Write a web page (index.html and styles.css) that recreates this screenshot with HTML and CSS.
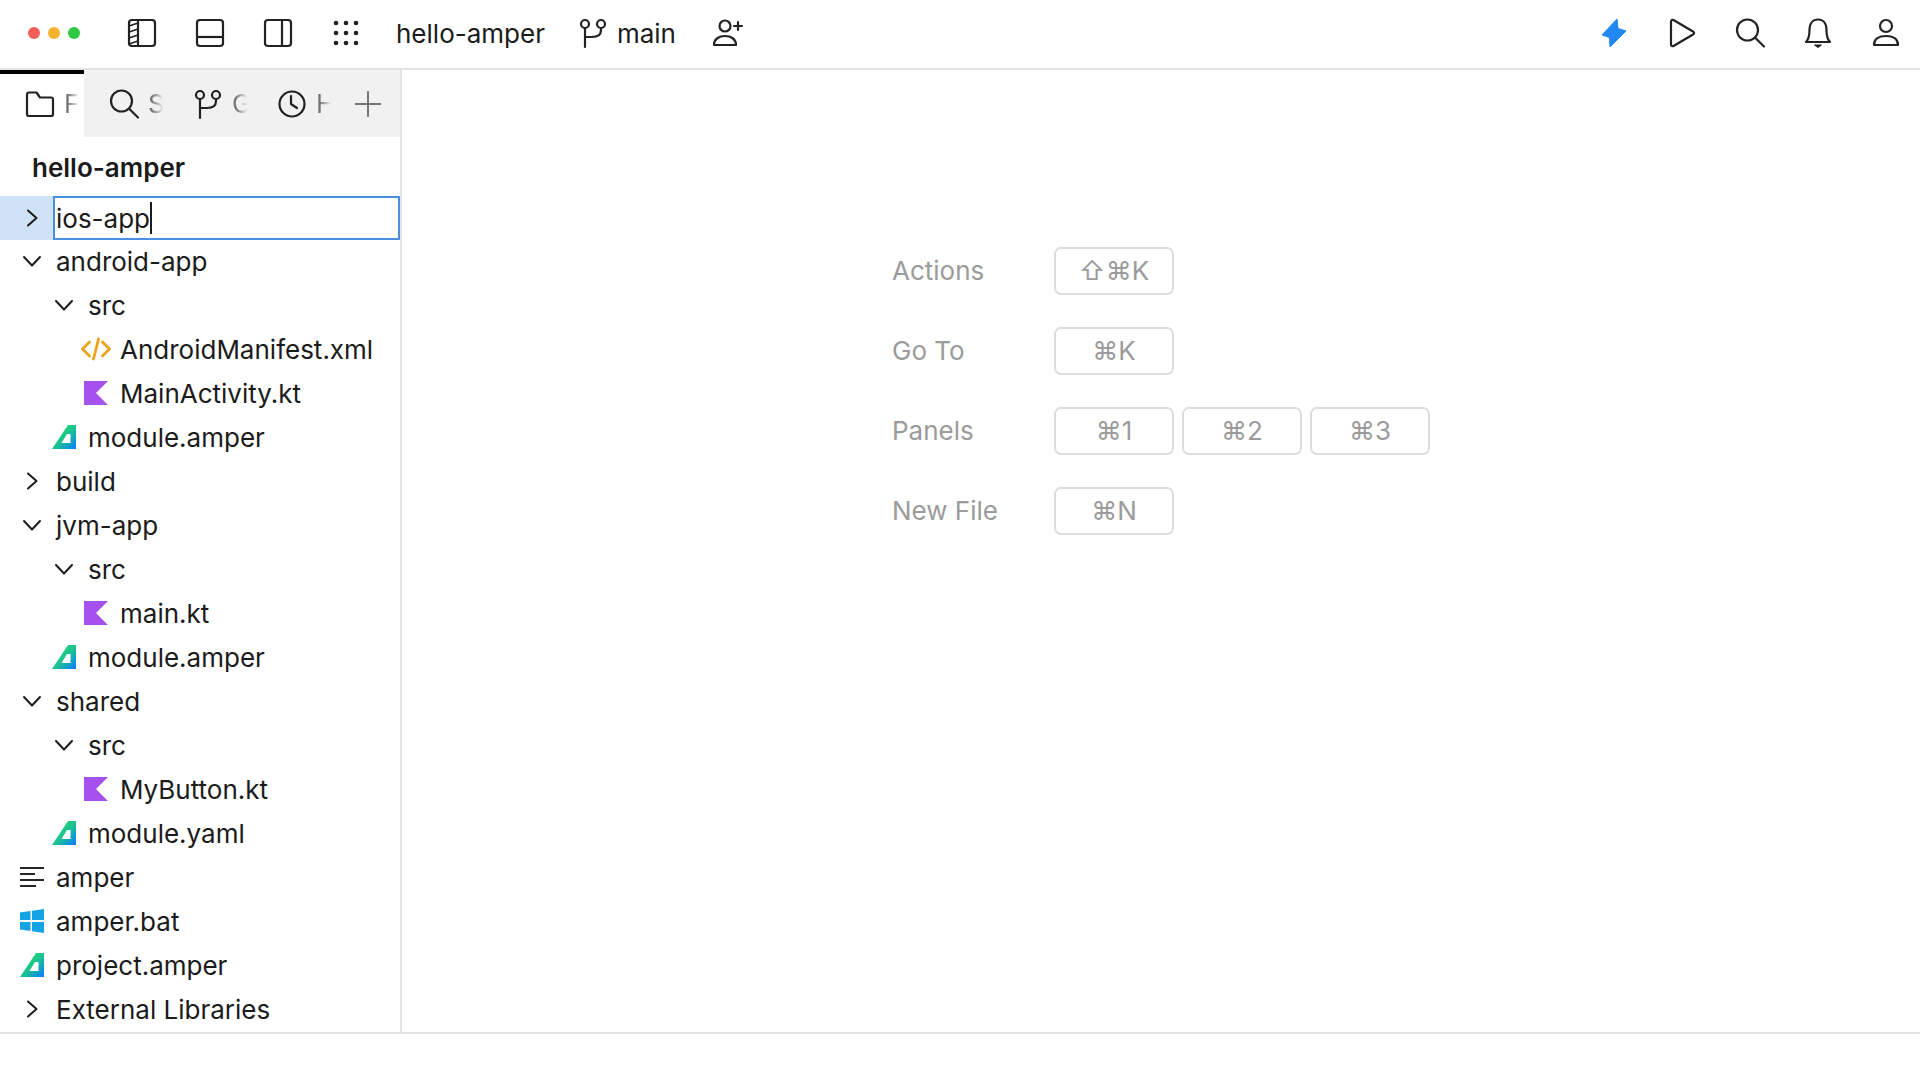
FILE: index.html
```html
<!DOCTYPE html>
<html lang="en">
<head>
<meta charset="utf-8">
<title>hello-amper</title>
<link rel="stylesheet" href="styles.css">
</head>
<body>
<svg class="sprite" aria-hidden="true">
  <defs>
    <linearGradient id="amperGrad" x1="0" y1="0" x2="1" y2="1">
      <stop offset="0" stop-color="#2ad45f"/>
      <stop offset="0.5" stop-color="#1cc78c"/>
      <stop offset="1" stop-color="#0b7bff"/>
    </linearGradient>
    <symbol id="i-chev-r" viewBox="0 0 24 24"><path d="M8 4.500 16.500 12 8 19.500" fill="none" stroke="#1c1c1c" stroke-width="2" stroke-linecap="round" stroke-linejoin="round"/></symbol>
    <symbol id="i-chev-d" viewBox="0 0 24 24"><path d="M4 8 12 16.500 20 8" fill="none" stroke="#1c1c1c" stroke-width="2" stroke-linecap="round" stroke-linejoin="round"/></symbol>
    <symbol id="i-kt" viewBox="0 0 24 24"><path d="M0 0H24L12 12 24 24H0Z" fill="#a650ee"/></symbol>
    <symbol id="i-amper" viewBox="0 0 24 24"><path d="M0 24 16 0H24V24Z" fill="url(#amperGrad)"/><path d="M9.500 18H18.500V9H15Z" fill="#fff"/></symbol>
    <symbol id="i-xml" viewBox="0 0 30 24"><path d="M8.500 5 1.500 12 8.500 19M21.500 5 28.500 12 21.500 19M17.500 2 12.500 22" fill="none" stroke="#eda41c" stroke-width="2.800" stroke-linecap="round" stroke-linejoin="round"/></symbol>
    <symbol id="i-lines" viewBox="0 0 24 24"><path d="M0 3H24M0 9H15M0 15H24M0 21H16" fill="none" stroke="#262626" stroke-width="2"/></symbol>
    <symbol id="i-win" viewBox="0 0 24 24"><path d="M0 3.500 10.500 2V11H0ZM12 1.800 24 0V11H12ZM0 13H10.500V22L0 20.500ZM12 13H24V24L12 22.200Z" fill="#15a3e6"/></symbol>
    <symbol id="i-branch" viewBox="0 0 32 32"><g fill="none" stroke="#222" stroke-width="2.200" stroke-linecap="round"><circle cx="8" cy="7" r="4"/><circle cx="24" cy="7" r="4"/><path d="M8 11V30M24 11V13C24 18 20 20 15 20H8"/></g></symbol>
    <symbol id="i-search" viewBox="0 0 32 32"><g fill="none" stroke="#222" stroke-width="2.200" stroke-linecap="round"><circle cx="13.500" cy="13" r="10.500"/><path d="M21.500 21 30 29.500"/></g></symbol>
  </defs>
</svg>
<div class="app">
  <header class="topbar">
    <div class="lights"><span class="light red"></span><span class="light yellow"></span><span class="light green"></span></div>
    <div class="tools">
      <svg class="tb-icon" viewBox="0 0 32 32"><g fill="none" stroke="#222" stroke-width="2.200"><rect x="3" y="3" width="26" height="26" rx="3"/><path d="M12 3V29"/><path d="M3 9 12 6M3 15 12 12M3 21 12 18M3 27 12 24" stroke-width="1.600"/></g></svg>
      <svg class="tb-icon" viewBox="0 0 32 32"><g fill="none" stroke="#222" stroke-width="2.200"><rect x="3" y="3" width="26" height="26" rx="3"/><path d="M3 20H29"/></g></svg>
      <svg class="tb-icon" viewBox="0 0 32 32"><g fill="none" stroke="#222" stroke-width="2.200"><rect x="3" y="3" width="26" height="26" rx="3"/><path d="M20 3V29"/></g></svg>
      <svg class="tb-icon" viewBox="0 0 32 32"><g fill="#222"><circle cx="6" cy="6" r="2.300"/><circle cx="16" cy="6" r="2.300"/><circle cx="26" cy="6" r="2.300"/><circle cx="6" cy="16" r="2.300"/><circle cx="16" cy="16" r="2.300"/><circle cx="26" cy="16" r="2.300"/><circle cx="6" cy="26" r="2.300"/><circle cx="16" cy="26" r="2.300"/><circle cx="26" cy="26" r="2.300"/></g></svg>
    </div>
    <span class="project">hello-amper</span>
    <svg class="tb-icon branch-icon"><use href="#i-branch"/></svg>
    <span class="branch-name">main</span>
    <svg class="tb-icon invite" viewBox="0 0 32 32"><g fill="none" stroke="#222" stroke-width="2.200" stroke-linecap="round" stroke-linejoin="round"><circle cx="13" cy="9" r="5.500"/><path d="M2 28C2 22 7 19 13 19S24 22 24 28Z"/><path d="M26 5V13M22 9H30"/></g></svg>
    <div class="actions">
      <svg class="tb-icon" viewBox="0 0 32 32"><path d="M19 2 4 18 11.500 20.500 12 30 28 14 20 11.500Z" fill="#2288f2" stroke="#2288f2" stroke-linejoin="round" stroke-width="1"/></svg>
      <svg class="tb-icon" viewBox="0 0 32 32"><path d="M5 4.500C5 3 6.500 2.500 7.500 3L27 14.500C28.500 15.500 28.500 16.500 27 17.500L7.500 29C6.500 29.500 5 29 5 27.500Z" fill="none" stroke="#222" stroke-width="2.200" stroke-linejoin="round"/></svg>
      <svg class="tb-icon"><use href="#i-search"/></svg>
      <svg class="tb-icon" viewBox="0 0 32 32"><g stroke="#222" stroke-width="2.200" stroke-linejoin="round"><path d="M4 25C7 22 7.500 18 7.500 13C7.500 6 11 2.500 16 2.500S24.500 6 24.500 13C24.500 18 25 22 28 25Z" fill="none"/><path d="M12.500 28H19.500L16 30.500Z" fill="#222" stroke-width="1"/></g></svg>
      <svg class="tb-icon" viewBox="0 0 32 32"><g fill="none" stroke="#222" stroke-width="2.200" stroke-linejoin="round"><circle cx="16" cy="9" r="6"/><path d="M4 28C4 22 9 19 16 19S28 22 28 28Z"/></g></svg>
    </div>
  </header>

  <div class="workspace">
    <aside class="sidebar">
      <nav class="tabs">
        <div class="tab active">
          <svg class="tab-icon" viewBox="0 0 32 32"><path d="M3 6.500C3 5.500 3.800 4.500 5 4.500H12.500L16 9.500H27C28.200 9.500 29 10.500 29 11.500V26C29 27 28.200 28 27 28H5C3.800 28 3 27 3 26Z" fill="none" stroke="#222" stroke-width="2.200" stroke-linejoin="round"/></svg>
          <span class="tab-label">Files</span>
        </div>
        <div class="tab">
          <svg class="tab-icon"><use href="#i-search"/></svg>
          <span class="tab-label">Search</span>
        </div>
        <div class="tab">
          <svg class="tab-icon"><use href="#i-branch"/></svg>
          <span class="tab-label">Git</span>
        </div>
        <div class="tab">
          <svg class="tab-icon" viewBox="0 0 32 32"><g fill="none" stroke="#222" stroke-width="2.200" stroke-linecap="round" stroke-linejoin="round"><circle cx="16" cy="16" r="12.500"/><path d="M15 8V16L21 20"/></g></svg>
          <span class="tab-label">History</span>
        </div>
        <div class="tab-add">
          <svg class="tab-icon" viewBox="0 0 32 32"><path d="M16 3V29M3 16H29" fill="none" stroke="#777" stroke-width="2"/></svg>
        </div>
      </nav>
      <div class="tree-title">hello-amper</div>
      <div class="tree">
        <div class="row editing d0"><svg class="ico"><use href="#i-chev-r"/></svg><div class="rename">ios-app<span class="caret"></span></div></div>
        <div class="row d0"><svg class="ico"><use href="#i-chev-d"/></svg><span>android-app</span></div>
        <div class="row d1"><svg class="ico"><use href="#i-chev-d"/></svg><span>src</span></div>
        <div class="row d2"><svg class="ico xml"><use href="#i-xml"/></svg><span>AndroidManifest.xml</span></div>
        <div class="row d2"><svg class="ico"><use href="#i-kt"/></svg><span>MainActivity.kt</span></div>
        <div class="row d1"><svg class="ico"><use href="#i-amper"/></svg><span>module.amper</span></div>
        <div class="row d0"><svg class="ico"><use href="#i-chev-r"/></svg><span>build</span></div>
        <div class="row d0"><svg class="ico"><use href="#i-chev-d"/></svg><span>jvm-app</span></div>
        <div class="row d1"><svg class="ico"><use href="#i-chev-d"/></svg><span>src</span></div>
        <div class="row d2"><svg class="ico"><use href="#i-kt"/></svg><span>main.kt</span></div>
        <div class="row d1"><svg class="ico"><use href="#i-amper"/></svg><span>module.amper</span></div>
        <div class="row d0"><svg class="ico"><use href="#i-chev-d"/></svg><span>shared</span></div>
        <div class="row d1"><svg class="ico"><use href="#i-chev-d"/></svg><span>src</span></div>
        <div class="row d2"><svg class="ico"><use href="#i-kt"/></svg><span>MyButton.kt</span></div>
        <div class="row d1"><svg class="ico"><use href="#i-amper"/></svg><span>module.yaml</span></div>
        <div class="row d0"><svg class="ico"><use href="#i-lines"/></svg><span>amper</span></div>
        <div class="row d0"><svg class="ico"><use href="#i-win"/></svg><span>amper.bat</span></div>
        <div class="row d0"><svg class="ico"><use href="#i-amper"/></svg><span>project.amper</span></div>
        <div class="row d0"><svg class="ico"><use href="#i-chev-r"/></svg><span>External Libraries</span></div>
      </div>
    </aside>
    <main class="editor">
      <div class="shortcuts">
        <span class="sc-label">Actions</span>
        <div class="keys"><kbd class="key">⇧⌘K</kbd></div>
        <span class="sc-label">Go To</span>
        <div class="keys"><kbd class="key">⌘K</kbd></div>
        <span class="sc-label">Panels</span>
        <div class="keys"><kbd class="key">⌘1</kbd><kbd class="key">⌘2</kbd><kbd class="key">⌘3</kbd></div>
        <span class="sc-label">New File</span>
        <div class="keys"><kbd class="key">⌘N</kbd></div>
      </div>
    </main>
  </div>
  <footer class="statusbar"></footer>
</div>
</body>
</html>
```

FILE: styles.css
```css
* { box-sizing: border-box; }
html, body { margin: 0; height: 100%; background: #fff; }
body {
  font-family: Inter, "DejaVu Sans", sans-serif;
  font-size: 26px;
  color: #1b1b1b;
  overflow: hidden;
}
.sprite { position: absolute; width: 0; height: 0; }
.app { display: flex; flex-direction: column; height: 1080px; }

/* top bar */
.topbar {
  flex: none;
  height: 70px;
  display: flex;
  align-items: center;
  padding: 0 18px 2px 28px;
  border-bottom: 2px solid #e3e3e3;
}
.lights { display: flex; gap: 8px; margin-right: 46px; }
.light { width: 12px; height: 12px; border-radius: 50%; }
.red { background: #f55f57; }
.yellow { background: #f5b32e; }
.green { background: #2bc840; }
.tools { display: flex; gap: 36px; margin-right: 34px; }
.tb-icon { flex: none; width: 32px; height: 32px; display: block; }
.project { margin-right: 32px; }
.branch-name { margin-left: 8px; margin-right: 36px; }
.actions { margin-left: auto; display: flex; gap: 36px; }

/* workspace */
.workspace { flex: none; height: 962px; display: flex; }
.sidebar { flex: none; width: 402px; border-right: 2px solid #e3e3e3; display: flex; flex-direction: column; }
.tabs { flex: none; height: 67px; display: flex; background: #f1f1f1; }
.tab {
  flex: none;
  width: 84px;
  padding: 0 0 0 24px;
  display: flex;
  align-items: center;
  gap: 8px;
  overflow: hidden;
}
.tab.active { background: #fff; border-top: 4px solid #000; padding-bottom: 4px; }
.tab-icon { flex: none; width: 32px; height: 32px; display: block; }
.tab-label {
  flex: none;
  width: 16px;
  overflow: hidden;
  white-space: nowrap;
  color: #777;
  -webkit-mask-image: linear-gradient(to right, #000 25%, transparent 95%);
  mask-image: linear-gradient(to right, #000 25%, transparent 95%);
}
.tab-add { flex: 1; display: flex; align-items: center; padding: 0 0 0 16px; }
.tree-title { flex: none; height: 59px; padding: 15px 0 0 32px; font-weight: 600; line-height: 32px; }
.tree { flex: 1; }
.row { height: 44px; display: flex; align-items: center; gap: 12px; white-space: nowrap; padding-bottom: 2px; }
.ico { flex: none; width: 24px; height: 24px; display: block; overflow: visible; }
.xml { width: 30px; margin: 0 -3px; }
.d0 { padding-left: 20px; }
.d1 { padding-left: 52px; }
.d2 { padding-left: 84px; }
.editing { background: #cfe2f6; gap: 9px; padding-bottom: 0; }
.rename {
  flex: 1;
  height: 44px;
  background: #fff;
  border: 2px solid #4a90e2;
  display: flex;
  align-items: center;
  padding-left: 1px;
}
.caret { width: 2px; height: 32px; background: #1b1b1b; }

/* editor */
.editor { flex: 1; padding: 177px 0 0 490px; }
.shortcuts {
  display: grid;
  grid-template-columns: 162px auto;
  justify-content: start;
  row-gap: 32px;
  align-items: center;
  color: #9b9b9b;
}
.sc-label { padding-bottom: 2px; }
.keys { display: flex; gap: 8px; }
.key {
  width: 120px;
  height: 48px;
  padding-bottom: 2px;
  border: 2px solid #dedede;
  border-radius: 7px;
  display: flex;
  align-items: center;
  justify-content: center;
  font-family: Inter, "DejaVu Sans", sans-serif;
  font-size: 26px;
  color: #9b9b9b;
}
.statusbar { flex: 1; border-top: 2px solid #e3e3e3; }
```
